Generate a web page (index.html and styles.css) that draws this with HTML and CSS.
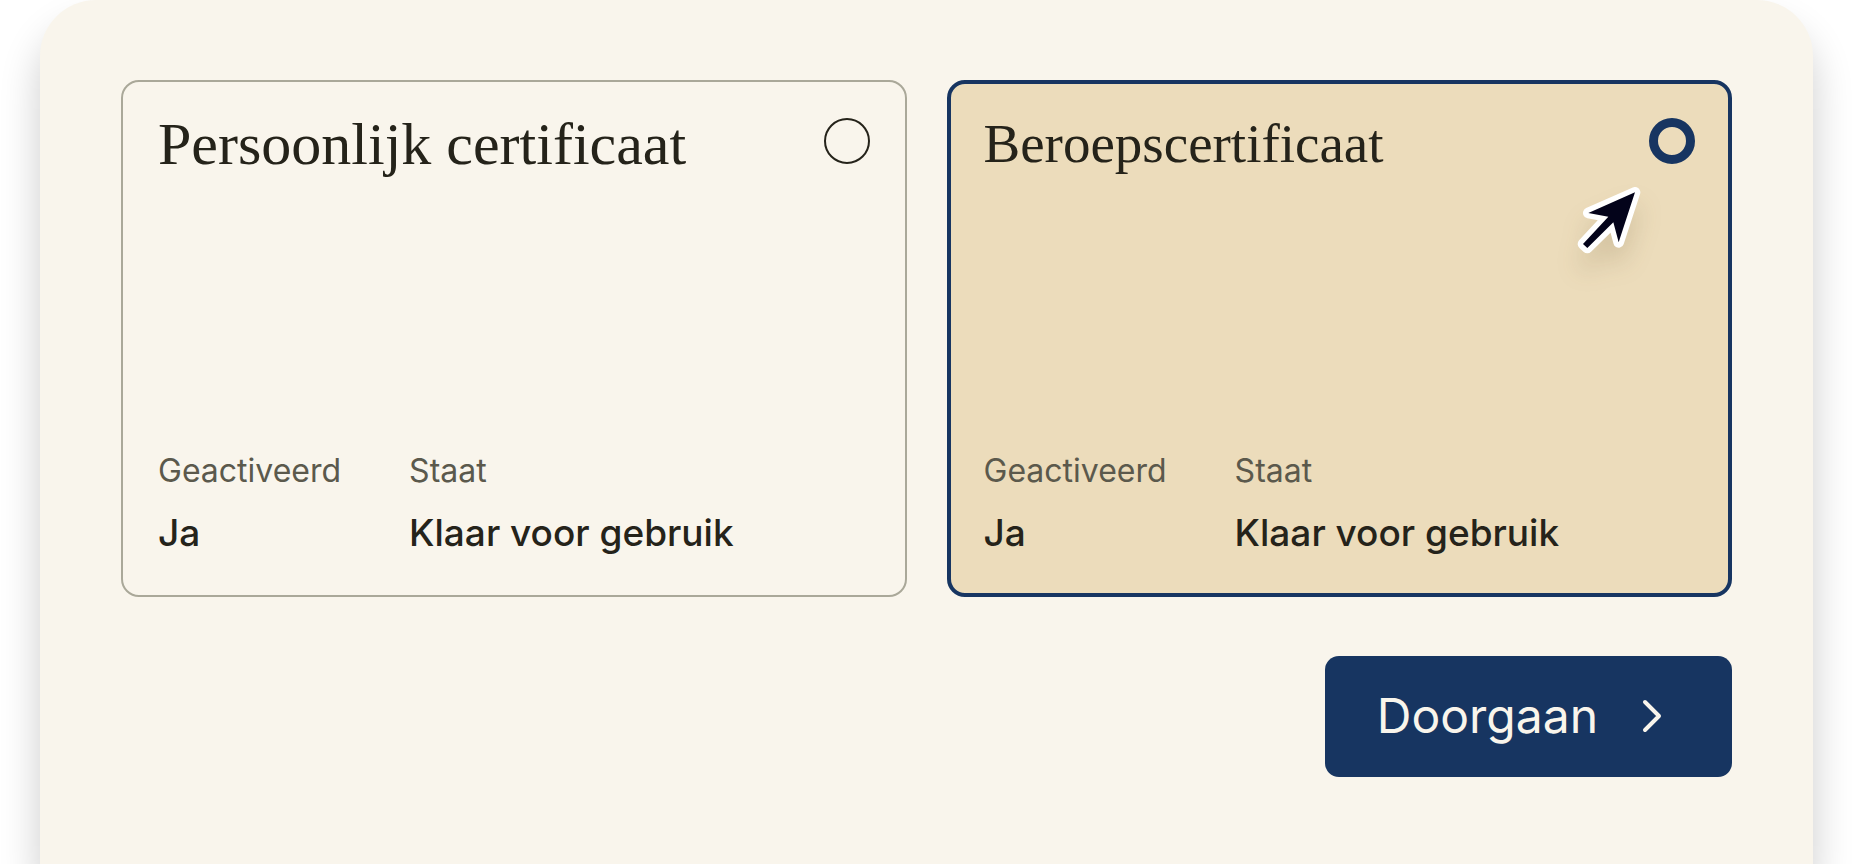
FILE: index.html
```html
<!DOCTYPE html>
<html lang="nl">
<head>
    <meta charset="UTF-8">
    <meta name="viewport" content="width=device-width, initial-scale=1">
    <title>Certificaat kiezen</title>
    <link rel="stylesheet" href="styles.css">
</head>
<body>

    <form class="panel">
        <div class="cards">
            <div class="card">
                <div class="card-header">
                    <label class="card-title title-large" for="personal">Persoonlijk certificaat</label>
                    <input class="radio" type="radio" name="certificate" id="personal" value="personal">
                </div>
                <dl class="details">
                    <div>
                        <dt>Geactiveerd</dt>
                        <dd>Ja</dd>
                    </div>
                    <div>
                        <dt>Staat</dt>
                        <dd>Klaar voor gebruik</dd>
                    </div>
                </dl>
            </div>

            <div class="card selected">
                <div class="card-header">
                    <label class="card-title" for="professional">Beroepscertificaat</label>
                    <input class="radio" type="radio" name="certificate" id="professional" value="professional" checked>
                </div>
                <dl class="details">
                    <div>
                        <dt>Geactiveerd</dt>
                        <dd>Ja</dd>
                    </div>
                    <div>
                        <dt>Staat</dt>
                        <dd>Klaar voor gebruik</dd>
                    </div>
                </dl>
                <svg class="cursor" viewBox="0 0 210 210" aria-hidden="true">
                    <path d="M183 25 43 87 103 98 27 180 40 192 118 115 134 175Z" fill="#fff" stroke="#fff" stroke-width="32" stroke-linejoin="round"/>
                    <path d="M183 25 43 87 103 98 27 180 40 192 118 115 134 175Z" fill="#03031a"/>
                </svg>
            </div>
        </div>

        <div class="actions">
            <button class="button" type="button">
                Doorgaan
                <svg class="chevron" viewBox="0 0 48 48" aria-hidden="true">
                    <path d="M17 10 31 24 17 38"/>
                </svg>
            </button>
        </div>
    </form>

</body>
</html>
```
FILE: styles.css
```css
* {
    box-sizing: border-box;
}

body {
    margin: 0;
    background-color: #fff;
    color: #25231a;
    font-family: Inter, Arial, sans-serif;
}

.panel {
    min-height: 100vh;
    margin: 0 40px;
    padding: 80px 81px;
    background-color: #f9f5ec;
    border-radius: 56px 56px 0 0;
    box-shadow: 0 28px 40px rgba(0, 0, 0, 0.2);
}

.cards {
    display: grid;
    grid-template-columns: 1fr 1fr;
    gap: 40px;
}

.card {
    position: relative;
    display: flex;
    flex-direction: column;
    justify-content: space-between;
    min-height: 517px;
    padding: 36px 35px 38px;
    border: 2px solid #aaa899;
    border-radius: 18px;
}

.card.selected {
    padding: 34px 33px 36px;
    background-color: #ecdcbb;
    border: 4px solid #173561;
}

.card-header {
    display: flex;
    justify-content: space-between;
    align-items: flex-start;
}

.card-title {
    font-family: "Liberation Serif", "Times New Roman", serif;
    font-size: 55px;
    line-height: 52px;
}

.title-large {
    font-size: 60px;
}

.radio {
    appearance: none;
    width: 46px;
    height: 46px;
    margin: 0;
    border: 2px solid #25231a;
    border-radius: 50%;
}

.radio:checked {
    border: 9px solid #173561;
}

.details {
    display: flex;
    gap: 68px;
    margin: 0;
}

.details dt {
    margin-bottom: 18px;
    color: #5b594c;
    font-size: 32px;
    line-height: 40px;
}

.details dd {
    margin: 0;
    font-size: 37px;
    font-weight: 500;
    line-height: 48px;
}

/* Mouse pointer on top of the selected card */
.cursor {
    position: absolute;
    top: 100px;
    right: 84px;
    width: 70px;
    height: 70px;
    overflow: visible;
    filter: drop-shadow(0 18px 12px rgba(80, 60, 20, 0.15));
}

.actions {
    display: flex;
    justify-content: flex-end;
    margin-top: 59px;
}

.button {
    display: flex;
    align-items: center;
    gap: 30px;
    padding: 36px 56px 37px 52px;
    background-color: #173561;
    border: 0;
    border-radius: 14px;
    color: #f9f5ec;
    font-family: inherit;
    font-size: 48px;
    line-height: 48px;
}

.chevron {
    width: 48px;
    height: 48px;
    fill: none;
    stroke: currentColor;
    stroke-width: 4;
    stroke-linecap: round;
    stroke-linejoin: round;
}
```
